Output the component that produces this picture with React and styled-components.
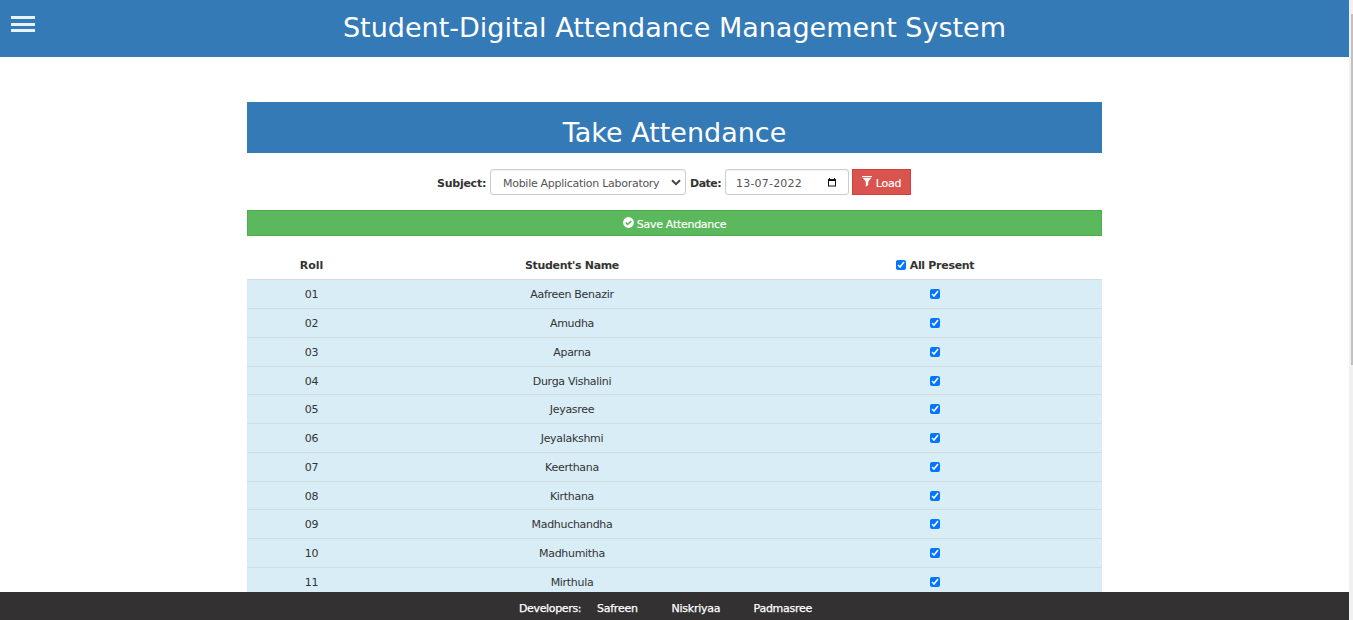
import React from "react";
import styled, { createGlobalStyle } from "styled-components";

const GlobalStyle = createGlobalStyle`
  * { box-sizing: border-box; }
  html, body { margin: 0; height: 620px; overflow: hidden; }
  body {
    background: #fff;
    color: #333;
    font-family: "DejaVu Sans", Verdana, sans-serif;
    font-size: 11px;
    line-height: 16px;
  }
`;

const Shell = styled.div`
  display: flex;
  width: 1353px;
  height: 620px;
`;

const Page = styled.div`
  display: flex;
  flex-direction: column;
  width: 1349px;
  height: 620px;
`;

const Header = styled.header`
  display: grid;
  grid-template-columns: 35px 1fr 35px;
  flex: none;
  height: 57px;
  background: #337ab7;
  color: #fff;
`;

const MenuButton = styled.button`
  display: flex;
  flex-direction: column;
  width: 35px;
  padding: 16px 0 0 11px;
  border: 0;
  background: none;
`;

const MenuBar = styled.span`
  width: 24px;
  height: 3px;
  margin-bottom: ${(p) => p.$gap || 0}px;
  background: #e6f1fa;
`;

const SiteTitle = styled.h1`
  margin: 0;
  padding-top: 8px;
  text-align: center;
  white-space: nowrap;
  font-size: 27px;
  font-weight: 400;
  line-height: 40px;
`;

const Main = styled.main`
  flex: 1;
  min-height: 0;
  width: 855px;
  margin-left: 247px;
  padding-top: 45px;
  overflow: hidden;
`;

const PanelTitle = styled.h2`
  height: 51px;
  margin: 0;
  padding-top: 11px;
  background: #337ab7;
  color: #fff;
  text-align: center;
  font-size: 27px;
  font-weight: 400;
  line-height: 40px;
`;

const Filters = styled.form`
  display: flex;
  align-items: center;
  height: 26px;
  margin: 16px 0 15px 190px;
`;

const Label = styled.label`
  width: ${(p) => p.$w}px;
  margin-right: 4px;
  padding-top: 3px;
  font-weight: 700;
  letter-spacing: ${(p) => p.$ls || 0}px;
  white-space: nowrap;
`;

const Field = styled.div`
  display: flex;
  align-items: center;
  justify-content: space-between;
  width: ${(p) => p.$w}px;
  height: 26px;
  margin-right: ${(p) => p.$gap}px;
  padding: 3px ${(p) => p.$pr}px 0 ${(p) => p.$pl}px;
  border: 1px solid #ccc;
  border-radius: 3px;
  box-shadow: inset 0 1px 1px rgba(0, 0, 0, 0.05);
  color: #555;
  white-space: nowrap;
  letter-spacing: ${(p) => p.$ls || 0}px;

  svg { flex: none; margin-top: -2px; }
`;

const Button = styled.button`
  display: flex;
  align-items: center;
  justify-content: center;
  gap: ${(p) => p.$gap}px;
  width: ${(p) => p.$w};
  height: 26px;
  padding: 0;
  border: 1px solid ${(p) => p.$edge};
  background: ${(p) => p.$bg};
  color: #fff;
  font: inherit;

  svg { margin-top: -1px; }
  span { padding-top: 3px; letter-spacing: -0.28px; -webkit-text-stroke: 0.15px #fff; }
`;

const Table = styled.table`
  width: 855px;
  margin-top: 15px;
  border-collapse: separate;
  border-spacing: 0;
  table-layout: fixed;
  text-align: center;
`;

const HeadCell = styled.th`
  width: ${(p) => p.$w}px;
  height: 28.3px;
  padding: 2px 0 0;
  font-weight: 700;
  letter-spacing: ${(p) => p.$ls || 0}px;
`;

const Row = styled.tr`
  background: #d9edf7;
`;

const Cell = styled.td`
  height: 28.77px;
  padding: 2.3px 0 0;
  border-top: 1px solid #d3dde1;
  letter-spacing: ${(p) => p.$ls || 0}px;
`;

const Check = styled.input.attrs({ type: "checkbox", defaultChecked: true })`
  width: 10px;
  height: 10px;
  margin: 0 ${(p) => p.$mr || 0}px 0 0;
  vertical-align: -1px;
`;

const Footer = styled.footer`
  display: flex;
  flex: none;
  height: 28px;
  padding: 9px 0 0 519px;
  background: #333132;
  color: #fff;
  white-space: nowrap;
  -webkit-text-stroke: 0.25px #fff;
`;

const FooterItem = styled.span`
  width: ${(p) => p.$w}px;
  letter-spacing: ${(p) => p.$ls || 0}px;
`;

const ScrollTrack = styled.div`
  width: 4px;
  padding: 14px 0 0 2px;
  background: #f1f1f1;
`;

const ScrollThumb = styled.div`
  height: 351px;
  background: #c1c1c1;
`;

const students = [
  "Aafreen Benazir",
  "Amudha",
  "Aparna",
  "Durga Vishalini",
  "Jeyasree",
  "Jeyalakshmi",
  "Keerthana",
  "Kirthana",
  "Madhuchandha",
  "Madhumitha",
  "Mirthula",
];

const Chevron = () => (
  <svg width="10" height="7" viewBox="0 0 10 7" fill="none" stroke="#444" strokeWidth="2">
    <path d="M1 1.2 5 5.2 9 1.2" />
  </svg>
);

const Calendar = () => (
  <svg width="8" height="9" viewBox="0 0 8 9">
    <path fill="#111" fillRule="evenodd" d="M1 0h1v1h4V0h1v1h1v7.5H0V1h1zM1 3v4.5h6V3z" />
  </svg>
);

const Funnel = () => (
  <svg width="10" height="11" viewBox="0 0 10 11" fill="#fff">
    <path d="M0 0h10v1.3H0zM.8 2h8.4L6.2 5.8V9L3.8 10.8V5.8z" />
  </svg>
);

const OkCircle = () => (
  <svg width="11" height="11" viewBox="0 0 11 11">
    <circle cx="5.5" cy="5.5" r="5.4" fill="#fff" />
    <path d="M2.9 5.6 4.8 7.4 8.2 4" fill="none" stroke="#5cb85c" strokeWidth="1.7" />
  </svg>
);

export default function App() {
  return (
    <Shell>
      <GlobalStyle />
      <Page>
        <Header>
          <MenuButton aria-label="Menu">
            <MenuBar $gap={4} />
            <MenuBar $gap={3} />
            <MenuBar />
          </MenuButton>
          <SiteTitle>Student-Digital Attendance Management System</SiteTitle>
        </Header>
        <Main>
          <PanelTitle>Take Attendance</PanelTitle>
          <Filters>
            <Label $w={49} $ls={-0.25}>Subject:</Label>
            <Field $w={196} $gap={4} $pl={12} $pr={4} $ls={-0.28}>
              Mobile Application Laboratory
              <Chevron />
            </Field>
            <Label $w={31} $ls={-0.5}>Date:</Label>
            <Field $w={124} $gap={3} $pl={10} $pr={12} $ls={0.2}>
              13-07-2022
              <Calendar />
            </Field>
            <Button type="button" $w="59px" $gap={4} $bg="#d9534f" $edge="#d43f3a">
              <Funnel />
              <span>Load</span>
            </Button>
          </Filters>
          <Button type="button" $w="855px" $gap={3} $bg="#5cb85c" $edge="#4cae4c">
            <OkCircle />
            <span>Save Attendance</span>
          </Button>
          <Table>
            <thead>
              <tr>
                <HeadCell $w={129}>Roll</HeadCell>
                <HeadCell $w={392} $ls={-0.34}>Student's Name</HeadCell>
                <HeadCell $w={334} $ls={-0.3}>
                  <Check $mr={4} />
                  All Present
                </HeadCell>
              </tr>
            </thead>
            <tbody>
              {students.map((name, i) => (
                <Row key={name}>
                  <Cell $ls={-0.3}>{String(i + 1).padStart(2, "0")}</Cell>
                  <Cell $ls={-0.3}>{name}</Cell>
                  <Cell>
                    <Check />
                  </Cell>
                </Row>
              ))}
            </tbody>
          </Table>
        </Main>
        <Footer>
          <FooterItem $w={78} $ls={-0.35}>Developers:</FooterItem>
          <FooterItem $w={74.5} $ls={-0.25}>Safreen</FooterItem>
          <FooterItem $w={82} $ls={-0.25}>Niskriyaa</FooterItem>
          <FooterItem $ls={-0.25}>Padmasree</FooterItem>
        </Footer>
      </Page>
      <ScrollTrack>
        <ScrollThumb />
      </ScrollTrack>
    </Shell>
  );
}
